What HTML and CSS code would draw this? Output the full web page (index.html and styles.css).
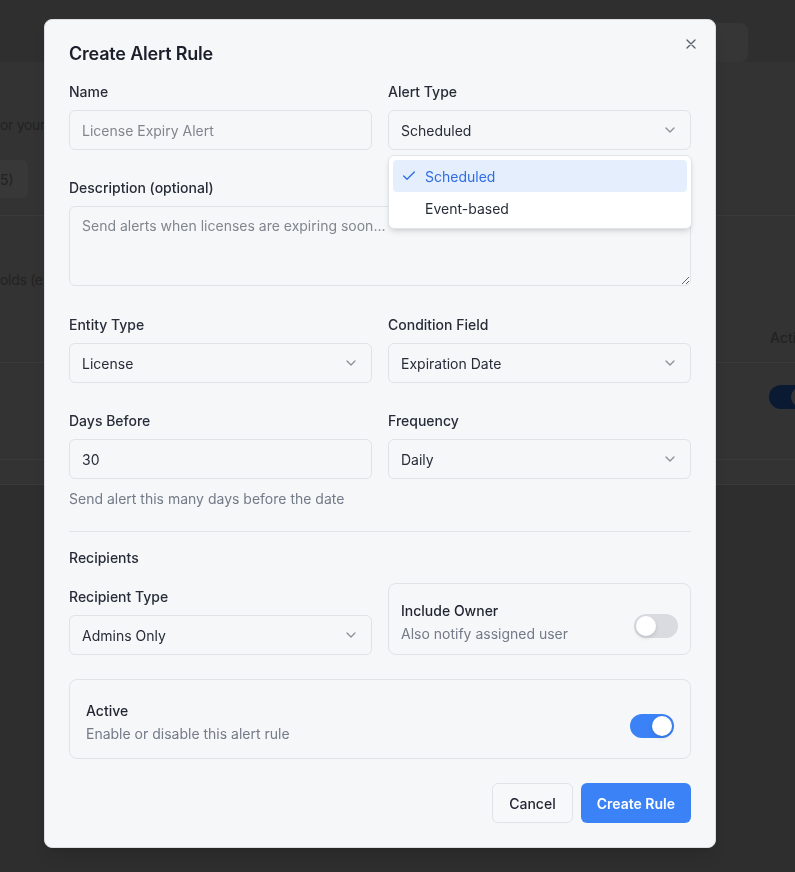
FILE: index.html
```html
<!DOCTYPE html>
<html lang="en">
<head>
<meta charset="utf-8">
<title>Create Alert Rule</title>
<link rel="stylesheet" href="styles.css">
</head>
<body>
<div class="page">
  <header class="bg-header"><div class="bg-search"></div></header>
  <main class="bg-card">
    <section class="bg-intro">
      <p class="bg-text">or your team</p>
      <div class="bg-btn">(5)</div>
    </section>
    <section class="bg-head">
      <p class="bg-text">olds (e.g. 30 days)</p>
      <div class="bg-th">Active</div>
    </section>
    <div class="bg-row"><span class="bg-toggle"><span class="bg-knob"></span></span></div>
    <div class="bg-foot"></div>
  </main>
</div>

<div class="modal" role="dialog">
  <button class="close" aria-label="Close">
    <svg viewBox="0 0 24 24" width="16" height="16" fill="none" stroke="currentColor" stroke-width="2" stroke-linecap="round" stroke-linejoin="round"><path d="M18 6 6 18M6 6l12 12"/></svg>
  </button>
  <h2 class="title">Create Alert Rule</h2>
  <div class="form">
    <div class="grid2">
      <div class="field">
        <label class="label">Name</label>
        <input class="input" placeholder="License Expiry Alert">
      </div>
      <div class="field">
        <label class="label">Alert Type</label>
        <div class="select"><span>Scheduled</span><svg class="chev" viewBox="0 0 24 24" fill="none" stroke="currentColor" stroke-width="2" stroke-linecap="round" stroke-linejoin="round"><path d="m6 9 6 6 6-6"/></svg></div>
        <div class="menu">
          <div class="item sel"><svg class="check" viewBox="0 0 24 24" fill="none" stroke="currentColor" stroke-width="2" stroke-linecap="round" stroke-linejoin="round"><path d="M20 6 9 17l-5-5"/></svg><span>Scheduled</span></div>
          <div class="item"><span class="check"></span><span>Event-based</span></div>
        </div>
      </div>
    </div>

    <div class="field field-desc">
      <label class="label">Description (optional)</label>
      <textarea class="textarea" placeholder="Send alerts when licenses are expiring soon..."></textarea>
    </div>

    <div class="grid2">
      <div class="field">
        <label class="label">Entity Type</label>
        <div class="select"><span>License</span><svg class="chev" viewBox="0 0 24 24" fill="none" stroke="currentColor" stroke-width="2" stroke-linecap="round" stroke-linejoin="round"><path d="m6 9 6 6 6-6"/></svg></div>
      </div>
      <div class="field">
        <label class="label">Condition Field</label>
        <div class="select"><span>Expiration Date</span><svg class="chev" viewBox="0 0 24 24" fill="none" stroke="currentColor" stroke-width="2" stroke-linecap="round" stroke-linejoin="round"><path d="m6 9 6 6 6-6"/></svg></div>
      </div>
    </div>

    <div class="grid2">
      <div class="field">
        <label class="label">Days Before</label>
        <input class="input" value="30">
        <p class="help">Send alert this many days before the date</p>
      </div>
      <div class="field">
        <label class="label">Frequency</label>
        <div class="select"><span>Daily</span><svg class="chev" viewBox="0 0 24 24" fill="none" stroke="currentColor" stroke-width="2" stroke-linecap="round" stroke-linejoin="round"><path d="m6 9 6 6 6-6"/></svg></div>
      </div>
    </div>

    <div class="section">
      <div class="sep"></div>
      <h4 class="h4">Recipients</h4>
      <div class="grid2 end">
        <div class="field">
          <label class="label">Recipient Type</label>
          <div class="select"><span>Admins Only</span><svg class="chev" viewBox="0 0 24 24" fill="none" stroke="currentColor" stroke-width="2" stroke-linecap="round" stroke-linejoin="round"><path d="m6 9 6 6 6-6"/></svg></div>
        </div>
        <div class="sbox">
          <div>
            <div class="stitle">Include Owner</div>
            <div class="sdesc">Also notify assigned user</div>
          </div>
          <span class="switch"><span class="knob"></span></span>
        </div>
      </div>
    </div>

    <div class="sbox lg">
      <div>
        <div class="stitle">Active</div>
        <div class="sdesc">Enable or disable this alert rule</div>
      </div>
      <span class="switch on"><span class="knob"></span></span>
    </div>

    <div class="actions">
      <button class="btn btn-outline">Cancel</button>
      <button class="btn btn-primary">Create Rule</button>
    </div>
  </div>
</div>
</body>
</html>
```

FILE: styles.css
```css
* { box-sizing: border-box; }
html, body { margin: 0; height: 100%; overflow: hidden; }
body {
  background: #2e2e2e;
  font-family: Inter, "Noto Sans", "Liberation Sans", sans-serif;
}

/* background page (under overlay) */
.bg-header {
  height: 62px;
  background: #2f2f2f;
  padding: 23px 47px 0 0;
  display: flex;
  justify-content: flex-end;
}
.bg-search { width: 320px; height: 39px; background: #363636; border-radius: 8px; }
.bg-card { background: #333333; }
.bg-intro { padding: 53px 0 17px; border-bottom: 1px solid #3a3a3a; }
.bg-text {
  margin: 0;
  font-size: 14px;
  line-height: 20px;
  letter-spacing: -0.3px;
  color: #222222;
  white-space: nowrap;
}
.bg-btn {
  margin: 25px 0 0 -21px;
  width: 49px;
  height: 38px;
  border-radius: 6px;
  background: #383838;
  display: flex;
  align-items: center;
  padding-left: 16px;
  font-size: 14px;
  color: #222222;
}
.bg-head { padding: 54px 0 14px; border-bottom: 1px solid #3a3a3a; }
.bg-th {
  margin: 38px 0 0 770px;
  font-size: 14px;
  line-height: 20px;
  font-weight: 500;
  color: #222222;
  white-space: nowrap;
}
.bg-row { padding: 22px 0 50px 769px; border-bottom: 1px solid #3a3a3a; }
.bg-toggle {
  display: flex;
  justify-content: flex-end;
  width: 44px;
  height: 24px;
  padding: 2px;
  border-radius: 12px;
  background: #0b1a33;
}
.bg-knob { width: 20px; height: 20px; border-radius: 50%; background: #333333; }
.bg-foot { height: 25px; border-bottom: 1px solid #3a3a3a; }

/* modal */
.modal {
  position: fixed;
  left: 44px;
  top: 19px;
  width: 672px;
  background: #f6f7f9;
  border: 1px solid #dcdee2;
  border-radius: 8px;
  padding: 24px;
  box-shadow: 0 10px 15px -3px rgba(0,0,0,.1), 0 4px 6px -4px rgba(0,0,0,.1);
}
.close {
  position: absolute;
  top: 16px;
  right: 16px;
  width: 16px;
  height: 16px;
  padding: 0;
  border: 0;
  background: none;
  color: #5b616d;
  display: flex;
  cursor: pointer;
}
.title {
  margin: 1px 0 15px;
  font-size: 18px;
  line-height: 18px;
  font-weight: 600;
  color: #1a1f2b;
  letter-spacing: -0.2px;
}
.form { display: flex; flex-direction: column; gap: 24px; }
.grid2 { display: grid; grid-template-columns: 1fr 1fr; gap: 16px; }
.grid2.end { align-items: end; }
.field { display: flex; flex-direction: column; gap: 8px; position: relative; }
.field-desc { margin-bottom: 1px; }
.label {
  padding-top: 4px;
  font-size: 14px;
  line-height: 20px;
  font-weight: 500;
  color: #262c38;
}
.input, .textarea {
  width: 100%;
  border: 1px solid #e1e3e8;
  border-radius: 6px;
  background: transparent;
  font-family: inherit;
  font-size: 14px;
  color: #262c38;
  outline: none;
}
.input { height: 40px; padding: 0 12px; }
.textarea {
  display: block;
  height: 80px;
  padding: 9px 12px;
  line-height: 20px;
  resize: vertical;
}
.input::placeholder, .textarea::placeholder { color: #80868f; opacity: 1; }
.select {
  height: 40px;
  border: 1px solid #e1e3e8;
  border-radius: 6px;
  padding: 0 12px;
  display: flex;
  align-items: center;
  justify-content: space-between;
  font-size: 14px;
  color: #262c38;
}
.chev { width: 16px; height: 16px; color: #262c38; opacity: .5; }
.help {
  margin: 2px 0 -2px;
  font-size: 14px;
  line-height: 20px;
  color: #737a88;
}

/* dropdown menu */
.menu {
  position: absolute;
  top: calc(100% + 5px);
  left: 0;
  right: -1px;
  background: #ffffff;
  border: 1px solid #e1e3e8;
  border-radius: 6px;
  padding: 4px;
  box-shadow: 0 4px 6px -1px rgba(0,0,0,.1), 0 2px 4px -2px rgba(0,0,0,.1);
  z-index: 10;
}
.item {
  height: 32px;
  display: flex;
  align-items: center;
  gap: 8px;
  padding: 0 8px;
  border-radius: 4px;
  font-size: 14px;
  color: #262c38;
}
.item.sel { background: #e5eefd; color: #2f6ce5; }
.check { width: 16px; height: 16px; flex-shrink: 0; }

/* recipients */
.section { display: flex; flex-direction: column; gap: 16px; }
.sep { height: 1px; background: #e1e3e8; }
.h4 {
  margin: 0 0 -1px;
  font-size: 14px;
  line-height: 20px;
  font-weight: 500;
  color: #262c38;
}

/* switch boxes */
.sbox {
  display: flex;
  align-items: center;
  justify-content: space-between;
  border: 1px solid #e1e3e8;
  border-radius: 8px;
  padding: 12px 12px 10px;
}
.sbox.lg { padding: 16px 16px 14px; }
.stitle {
  padding-top: 5px;
  font-size: 14px;
  line-height: 20px;
  font-weight: 500;
  color: #1f2430;
}
.sdesc {
  margin-top: 3px;
  font-size: 14px;
  line-height: 20px;
  color: #737a88;
}
.switch {
  display: flex;
  flex-shrink: 0;
  width: 44px;
  height: 24px;
  margin-top: 11px;
  border-radius: 12px;
  border: 2px solid transparent;
  background: #dadbe0;
}
.switch.on { background: #3b82f6; justify-content: flex-end; }
.knob {
  width: 20px;
  height: 20px;
  border-radius: 50%;
  background: #ffffff;
  box-shadow: 0 2px 4px rgba(0,0,0,.12);
}

/* actions */
.actions { display: flex; justify-content: flex-end; gap: 8px; }
.btn {
  height: 40px;
  padding: 0 16px;
  border-radius: 6px;
  font-family: inherit;
  font-size: 14px;
  font-weight: 500;
  cursor: pointer;
}
.btn-outline { border: 1px solid #e1e3e8; background: #f7f8fa; color: #1f2430; }
.btn-primary { border: 0; background: #3b82f6; color: #ffffff; font-weight: 600; }
```
